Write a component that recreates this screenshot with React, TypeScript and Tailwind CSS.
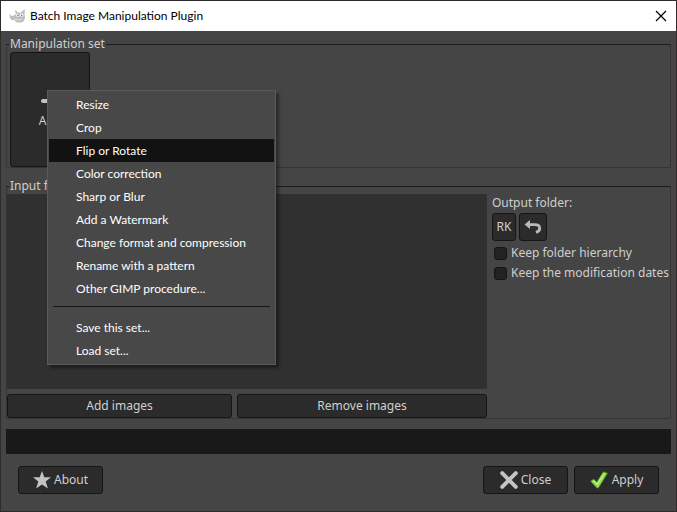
import type { ReactNode } from 'react';

const toolItems = [
  'Resize',
  'Crop',
  'Flip or Rotate',
  'Color correction',
  'Sharp or Blur',
  'Add a Watermark',
  'Change format and compression',
  'Rename with a pattern',
  'Other GIMP procedure...',
];

const setItems = ['Save this set...', 'Load set...'];

const buttonStyle =
  'flex items-center justify-center rounded-[3px] border border-[#151515] bg-[#2b2b2b] hover:bg-[#333333]';

function WilberIcon() {
  return (
    <svg width="17" height="15" viewBox="0 0 17 15" aria-hidden="true">
      <path
        d="M0.5 5L2.5 7L5 6.6L7 5L5.6 1.6L7.5 2L8.8 3.6L12 3.4L15.2 0.5L16 1L15.4 5.5L16.2 8.5L14.8 12L12.5 13.5L8 13.4L5 11L2.5 11L0.8 8.5Z"
        fill="#bdbdbd"
      />
      <circle cx="8.7" cy="6.3" r="1.7" fill="#f4f4f4" />
      <circle cx="12.7" cy="6.1" r="1.8" fill="#f4f4f4" />
      <circle cx="9" cy="6.4" r="0.8" fill="#777" />
      <circle cx="12.6" cy="6.3" r="0.8" fill="#777" />
      <path d="M5 9.8L9 11L13 10.4" fill="none" stroke="#e8e8e8" strokeWidth="0.9" />
    </svg>
  );
}

function StarIcon() {
  return (
    <svg width="18" height="18" viewBox="0 0 18 18" aria-hidden="true">
      <path d="M9 0L11.3 6.3H18L12.7 10.4L14.9 17.6L9 13.4L3.1 17.6L5.3 10.4L0 6.3H6.7Z" fill="#c3c3c3" />
    </svg>
  );
}

function CrossIcon() {
  return (
    <svg width="18" height="18" viewBox="0 0 18 18" aria-hidden="true">
      <path d="M2.2 2.2L15.8 15.8M15.8 2.2L2.2 15.8" stroke="#c3c3c3" strokeWidth="4" strokeLinecap="round" />
    </svg>
  );
}

function CheckIcon() {
  return (
    <svg width="18" height="18" viewBox="0 0 18 18" aria-hidden="true">
      <path
        d="M0.8 10.3L3.8 8.3L6.8 11.3L13.4 0.9L17.3 2.3L8.3 16.9H7.1Z"
        fill="#9be05a"
        stroke="#55a51c"
        strokeLinejoin="round"
      />
      <path d="M2.5 10.5L3.7 9.7L7.2 13.2L13.9 2.4" fill="none" stroke="#cdf59c" />
    </svg>
  );
}

function UndoIcon() {
  return (
    <svg width="18" height="16" viewBox="0 0 18 16" aria-hidden="true">
      <path d="M0.5 5.5L6 1V10Z" fill="#b8b8b8" />
      <path d="M5 5.7H11C16.8 5.7 17.4 11.6 12 13.4" fill="none" stroke="#b8b8b8" strokeWidth="2.8" />
    </svg>
  );
}

function Group({ title, className, children }: { title: string; className?: string; children: ReactNode }) {
  return (
    <fieldset className={`min-w-0 border border-[#353535] border-t-[#1c1c1c] ${className || ''}`}>
      <legend className="ml-[2px] h-4 px-px leading-4 whitespace-nowrap">{title}</legend>
      {children}
    </fieldset>
  );
}

function MenuItem({ label, active }: { label: string; active?: boolean }) {
  return (
    <button
      role="menuitem"
      className={`block h-[23px] w-full pl-[27px] text-left leading-[22px] hover:bg-[#121212] ${active ? 'bg-[#121212]' : ''}`}
    >
      {label}
    </button>
  );
}

export default function App() {
  return (
    <div className="relative flex min-h-screen flex-col border border-[#2d2b2b] bg-[#454545] font-['Noto_Sans',sans-serif] text-xs text-[#cfcfcf]">
      {/* Title bar */}
      <header className="flex h-[30px] items-center bg-white pr-[9px] pl-2 font-[Lato,sans-serif] text-xs text-black">
        <WilberIcon />
        <h1 className="ml-1 flex-1">Batch Image Manipulation Plugin</h1>
        <button aria-label="Close window">
          <svg width="12" height="12" viewBox="0 0 12 12" aria-hidden="true">
            <path d="M1 1L11 11M11 1L1 11" stroke="#000" strokeWidth="1.2" />
          </svg>
        </button>
      </header>

      <main className="flex flex-1 flex-col gap-[10px] px-[5px] pt-[5px]">
        <Group title="Manipulation set">
          <button className={`${buttonStyle} ml-[3px] h-[115px] w-20 flex-col gap-1`}>
            <svg width="18" height="18" viewBox="0 0 18 18" aria-hidden="true">
              <path d="M2 10H16M9 3V17" stroke="#c3c3c3" strokeWidth="4" strokeLinecap="round" />
            </svg>
            Add
          </button>
        </Group>

        <Group title="Input files" className="flex flex-1 flex-col">
          <div className="flex h-full">
            <div className="flex min-w-0 flex-1 flex-col gap-[5px]">
              <div className="min-h-[195px] flex-1 bg-[#303030]" />
              <div className="flex gap-[5px]">
                <button className={`${buttonStyle} h-6 flex-[9]`}>Add images</button>
                <button className={`${buttonStyle} h-6 flex-[10]`}>Remove images</button>
              </div>
            </div>
            <div className="ml-[5px] w-[178px] shrink-0 whitespace-nowrap">
              <p className="leading-[18px]">Output folder:</p>
              <div className="mt-px flex gap-[3px]">
                <button className={`${buttonStyle} h-7 w-6`}>RK</button>
                <button aria-label="Reset folder" className={`${buttonStyle} h-7 w-7`}>
                  <UndoIcon />
                </button>
              </div>
              <div className="mt-[2px] ml-[2px]">
                {['Keep folder hierarchy', 'Keep the modification dates'].map((label) => (
                  <label key={label} className="flex h-5 items-center gap-1">
                    <input
                      type="checkbox"
                      className="size-[13px] appearance-none rounded-[3px] border border-[#151515] bg-[#222222] checked:bg-[#c3c3c3]"
                    />
                    {label}
                  </label>
                ))}
              </div>
            </div>
          </div>
        </Group>

        <div role="progressbar" aria-label="Progress" className="h-[25px] bg-[#191919]" />
      </main>

      {/* Dialog actions */}
      <footer className="flex gap-[6px] px-[17px] pt-3 pb-[17px]">
        <button className={`${buttonStyle} mr-auto h-7 w-[85px] gap-[3px]`}>
          <StarIcon />
          About
        </button>
        <button className={`${buttonStyle} h-7 w-[85px] gap-[3px]`}>
          <CrossIcon />
          Close
        </button>
        <button className={`${buttonStyle} h-7 w-[85px] gap-1`}>
          <CheckIcon />
          Apply
        </button>
      </footer>

      {/* Popup of the Add button */}
      <div
        role="menu"
        className="absolute top-[89px] left-[46px] w-[229px] border border-[#5a5a5a] bg-[#484848] px-px py-[2px] font-[Lato,sans-serif] text-xs text-white shadow-[3px_3px_3px_rgba(0,0,0,0.4)]"
      >
        {toolItems.map((item) => (
          <MenuItem key={item} label={item} active={item === 'Flip or Rotate'} />
        ))}
        <hr className="mx-1 mt-[6px] mb-[9px] border-[#151515]" />
        {setItems.map((item) => (
          <MenuItem key={item} label={item} />
        ))}
      </div>
    </div>
  );
}
